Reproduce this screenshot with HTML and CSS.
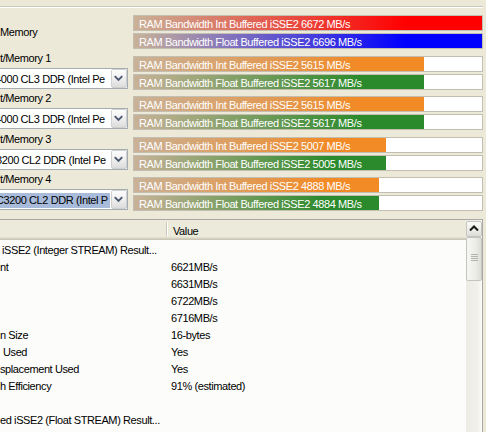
FILE: index.html
```html
<!DOCTYPE html>
<html>
<head>
<meta charset="utf-8">
<title>Memory Bandwidth</title>
<link rel="stylesheet" href="styles.css">
</head>
<body>
<div class="groove"></div>
<div class="groups">
  <div class="group">
    <div class="side side-center"><span class="label">Memory</span></div>
    <div class="bars">
      <div class="bar bar-red" style="--w:348px">RAM Bandwidth Int Buffered iSSE2 6672 MB/s</div>
      <div class="bar bar-blue" style="--w:348px">RAM Bandwidth Float Buffered iSSE2 6696 MB/s</div>
    </div>
  </div>
  <div class="group">
    <div class="side side-combo">
      <span class="label">t/Memory 1</span>
      <div class="combo">
        <div class="combo-text"><span class="combo-value shift-4">4000 CL3 DDR (Intel Pe</span></div>
        <div class="combo-btn"><svg width="16" height="19" viewBox="0 0 16 19"><polyline points="4,7 8,11 12,7" fill="none" stroke="#4a5670" stroke-width="2"/></svg></div>
      </div>
    </div>
    <div class="bars">
      <div class="bar bar-orange" style="--w:290px">RAM Bandwidth Int Buffered iSSE2 5615 MB/s</div>
      <div class="bar bar-green" style="--w:290px">RAM Bandwidth Float Buffered iSSE2 5617 MB/s</div>
    </div>
  </div>
  <div class="group">
    <div class="side side-combo">
      <span class="label">t/Memory 2</span>
      <div class="combo">
        <div class="combo-text"><span class="combo-value shift-4">4000 CL3 DDR (Intel Pe</span></div>
        <div class="combo-btn"><svg width="16" height="19" viewBox="0 0 16 19"><polyline points="4,7 8,11 12,7" fill="none" stroke="#4a5670" stroke-width="2"/></svg></div>
      </div>
    </div>
    <div class="bars">
      <div class="bar bar-orange" style="--w:290px">RAM Bandwidth Int Buffered iSSE2 5615 MB/s</div>
      <div class="bar bar-green" style="--w:290px">RAM Bandwidth Float Buffered iSSE2 5617 MB/s</div>
    </div>
  </div>
  <div class="group">
    <div class="side side-combo">
      <span class="label">t/Memory 3</span>
      <div class="combo">
        <div class="combo-text"><span class="combo-value shift-3">3200 CL2 DDR (Intel Pe</span></div>
        <div class="combo-btn"><svg width="16" height="19" viewBox="0 0 16 19"><polyline points="4,7 8,11 12,7" fill="none" stroke="#4a5670" stroke-width="2"/></svg></div>
      </div>
    </div>
    <div class="bars">
      <div class="bar bar-orange" style="--w:252px">RAM Bandwidth Int Buffered iSSE2 5007 MB/s</div>
      <div class="bar bar-green" style="--w:252px">RAM Bandwidth Float Buffered iSSE2 5005 MB/s</div>
    </div>
  </div>
  <div class="group">
    <div class="side side-combo">
      <span class="label">t/Memory 4</span>
      <div class="combo">
        <div class="combo-text"><span class="combo-value combo-selected shift-3">C3200 CL2 DDR (Intel P</span></div>
        <div class="combo-btn"><svg width="16" height="19" viewBox="0 0 16 19"><polyline points="4,7 8,11 12,7" fill="none" stroke="#4a5670" stroke-width="2"/></svg></div>
      </div>
    </div>
    <div class="bars">
      <div class="bar bar-orange" style="--w:245px">RAM Bandwidth Int Buffered iSSE2 4888 MB/s</div>
      <div class="bar bar-green" style="--w:245px">RAM Bandwidth Float Buffered iSSE2 4884 MB/s</div>
    </div>
  </div>
</div>

<div class="list">
  <div class="list-main">
    <div class="list-header">
      <div class="h-name"></div>
      <div class="h-div"></div>
      <div class="h-value">Value</div>
    </div>
    <div class="rows">
      <div class="row"><span class="c-name c-indent">iSSE2 (Integer STREAM) Result...</span><span class="c-val"></span></div>
      <div class="row"><span class="c-name">nt</span><span class="c-val">6621MB/s</span></div>
      <div class="row"><span class="c-name"></span><span class="c-val">6631MB/s</span></div>
      <div class="row"><span class="c-name"></span><span class="c-val">6722MB/s</span></div>
      <div class="row"><span class="c-name"></span><span class="c-val">6716MB/s</span></div>
      <div class="row"><span class="c-name">n Size</span><span class="c-val">16-bytes</span></div>
      <div class="row"><span class="c-name c-used">Used</span><span class="c-val">Yes</span></div>
      <div class="row"><span class="c-name">splacement Used</span><span class="c-val">Yes</span></div>
      <div class="row"><span class="c-name">h Efficiency</span><span class="c-val">91% (estimated)</span></div>
      <div class="row"><span class="c-name"></span><span class="c-val"></span></div>
      <div class="row"><span class="c-name">ed iSSE2 (Float STREAM) Result...</span><span class="c-val"></span></div>
      <div class="row"><span class="c-name"></span><span class="c-val"></span></div>
    </div>
  </div>
  <div class="vscroll">
    <div class="sb-btn"><svg width="14" height="14" viewBox="0 0 14 14"><polyline points="3,8.5 7,4.5 11,8.5" fill="none" stroke="#1a1a1a" stroke-width="2"/></svg></div>
    <div class="sb-thumb"><div class="grip"></div><div class="grip"></div><div class="grip"></div><div class="grip"></div></div>
    <div class="sb-track"></div>
  </div>
</div>
</body>
</html>
```

FILE: styles.css
```css
* { box-sizing: border-box; }
html, body { margin: 0; padding: 0; }
body {
  width: 486px;
  height: 432px;
  overflow: hidden;
  background: #ECE9D8;
  font-family: "Liberation Sans", Arial, sans-serif;
  font-size: 11px;
  letter-spacing: -0.4px;
  color: #000;
}

.groove {
  margin: 6px 3px 0 0;
  height: 2px;
  border-top: 1px solid #CBC8B9;
  border-bottom: 1px solid #FFFFFF;
}

.groups {
  margin-top: 7px;
  padding-right: 3px;
  display: flex;
  flex-direction: column;
  gap: 6.5px;
}

.group {
  display: flex;
  gap: 5px;
  height: 34px;
}

.side {
  width: 128px;
  flex: none;
  display: flex;
  flex-direction: column;
  overflow: hidden;
}
.side-center { justify-content: center; }
.side-combo {
  height: 37px;
  margin-top: -4px;
  gap: 3px;
}
.label {
  display: block;
  line-height: 13px;
  height: 13px;
  white-space: nowrap;
}

.combo {
  height: 21px;
  margin-left: -2px;
  border: 1px solid #A5ACB2;
  background: #fff;
  display: flex;
}
.combo-text {
  flex: 1;
  overflow: hidden;
  white-space: nowrap;
  display: flex;
  align-items: center;
  padding-top: 2px;
}
.combo-value {
  line-height: 15px;
  padding-right: 2px;
}
.shift-4 { margin-left: -4px; }
.shift-3 { margin-left: -3px; }
.combo-selected {
  background: #A8BBDA;
}
.combo-btn {
  width: 16px;
  flex: none;
  border: 1px solid #CFCFCF;
  border-radius: 2px;
  background: linear-gradient(180deg, #FDFDFD 0%, #EFEFEF 50%, #DCDCDC 100%);
  display: flex;
}
.combo-btn svg { margin: -1px 0 0 -1px; }

.bars {
  flex: 1;
  display: flex;
  flex-direction: column;
  gap: 2px;
}
.bar {
  height: 16px;
  border: 1px solid #C2BEB1;
  background:
    linear-gradient(90deg, #C9B298 0%, var(--c) 78%) 0 0 / var(--w) 100% no-repeat,
    #FFFFFF;
  color: #FFFFFF;
  line-height: 16px;
  padding-left: 5px;
  white-space: nowrap;
}
.bar-red { --c: #FF0000; }
.bar-blue { --c: #0000FF; }
.bar-orange { --c: #F28A26; }
.bar-green { --c: #2B8A2B; }

.list {
  margin: 8px 3px 0 -2px;
  height: 213px;
  border: 1px solid #A9A8A4;
  border-bottom: none;
  background: #FCFCFA;
  display: flex;
}
.list-main {
  flex: 1;
  overflow: hidden;
  display: flex;
  flex-direction: column;
}
.list-header {
  height: 20px;
  flex: none;
  display: flex;
  align-items: center;
  background: linear-gradient(180deg,
    #EBEADB 0, #EBEADB 17px,
    #E2DECD 17px, #E2DECD 18px,
    #D6D2C2 18px, #D6D2C2 19px,
    #CBC7B8 19px, #CBC7B8 20px);
}
.h-name { width: 167px; flex: none; }
.h-div {
  width: 2px;
  height: 14px;
  margin-top: -2px;
  border-left: 1px solid #CDC9B9;
  border-right: 1px solid #FFFFFF;
}
.h-value {
  flex: 1;
  padding-left: 5px;
  padding-top: 3px;
  line-height: 17px;
  white-space: nowrap;
}

.rows {
  padding-top: 2px;
  display: flex;
  flex-direction: column;
}
.row {
  height: 17px;
  line-height: 17px;
  display: flex;
  white-space: nowrap;
}
.c-name {
  width: 167px;
  flex: none;
  overflow: hidden;
  padding-left: 1px;
}
.c-indent { padding-left: 3px; }
.c-used { padding-left: 4px; }
.c-val {
  flex: 1;
  padding-left: 5px;
}

.vscroll {
  width: 16px;
  flex: none;
  display: flex;
  flex-direction: column;
  padding-top: 1px;
  background: linear-gradient(90deg, #ECEBE4 0%, #F1F0EA 70%, #FBFBF9 100%);
}
.sb-btn {
  height: 16px;
  flex: none;
  border: 1px solid #C4C4C0;
  border-radius: 2px;
  background: linear-gradient(180deg, #FAFAF8 0%, #ECECE8 60%, #DCDCD6 100%);
  display: flex;
  align-items: center;
  justify-content: center;
}
.sb-thumb {
  height: 44px;
  flex: none;
  border: 1px solid #C4C4C0;
  border-radius: 2px;
  background: linear-gradient(90deg, #F6F6F4 0%, #ECECE8 60%, #DEDED9 100%);
  display: flex;
  flex-direction: column;
  align-items: center;
  justify-content: center;
  gap: 1px;
  padding-bottom: 4px;
}
.grip {
  width: 7px;
  height: 1px;
  background: #B4B4AE;
}
.sb-track { flex: 1; }
```
